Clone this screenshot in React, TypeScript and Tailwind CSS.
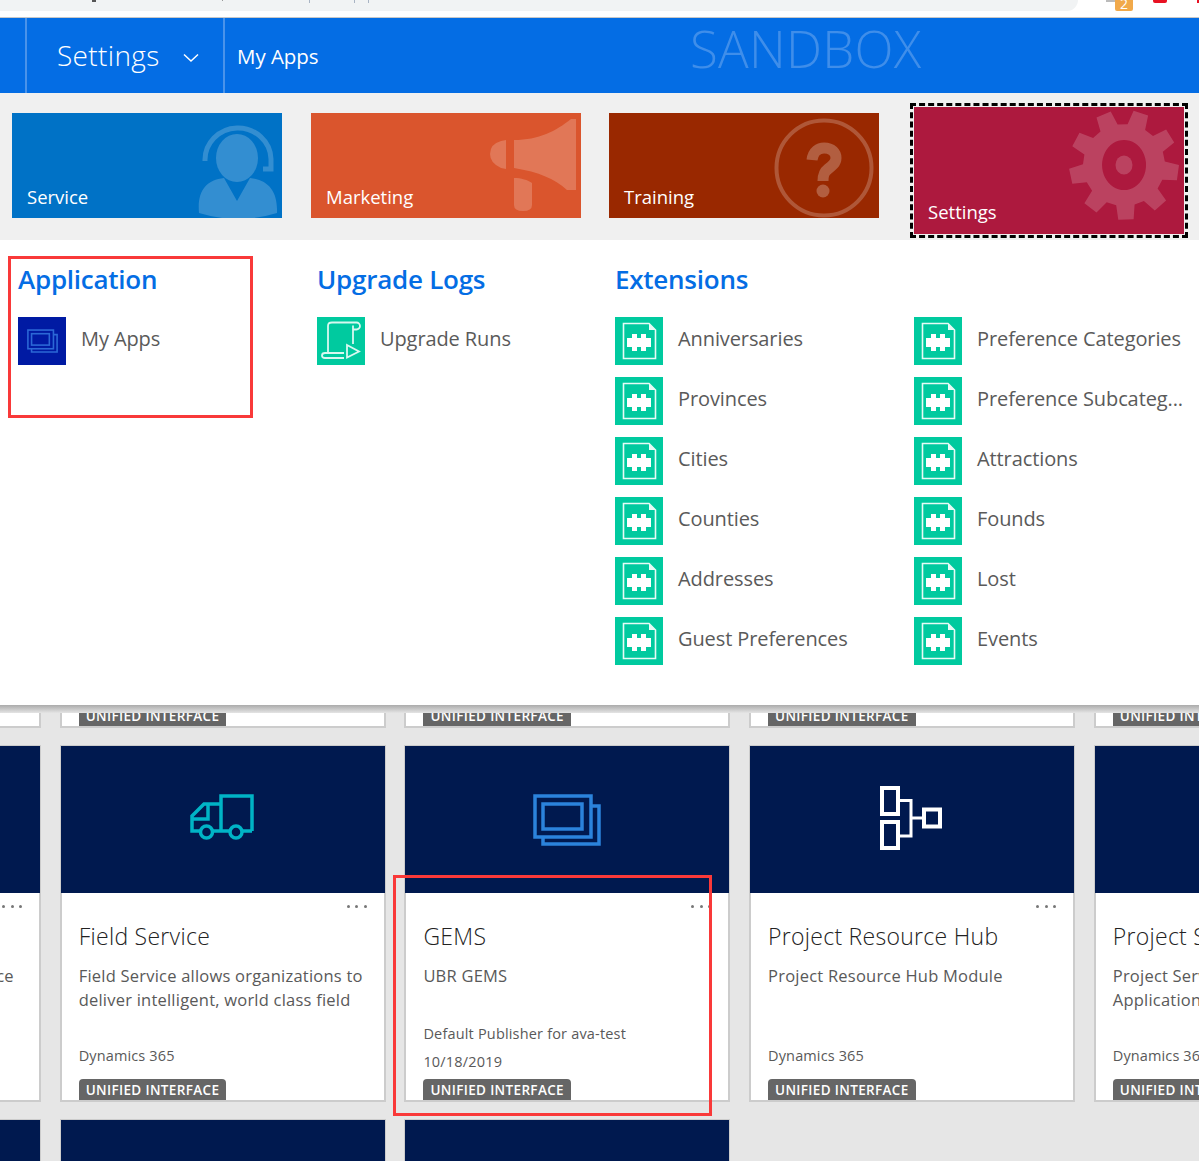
import React from "react";

const FONT = { fontFamily: '"Open Sans","Noto Sans",sans-serif' };

function Tile({ label, bg, children }: { label: string; bg: string; children: React.ReactNode }) {
  return (
    <div className={`relative w-[270px] h-[105px] shrink-0 overflow-hidden ${bg}`}>
      <div className="absolute right-0 top-0 bottom-0 w-[100px]">{children}</div>
      <div className="absolute left-[15px] top-[72px] text-[18.5px] leading-[24px] text-white">{label}</div>
    </div>
  );
}

const AgentIcon = () => (
  <svg width="100" height="105" viewBox="0 0 100 105" fill="none">
    <path d="M23 48 A33 32 0 1 1 89 46 V 56 H 81" stroke="#fff" strokeOpacity=".2" strokeWidth="5" />
    <ellipse cx="55" cy="45" rx="21" ry="24" fill="#fff" fillOpacity=".2" />
    <path d="M17 100 C15 78 24 67 42 65 L55 88 L68 65 C86 67 96 78 95 100 Q56 112 17 100 Z" fill="#fff" fillOpacity=".2" />
  </svg>
);

const MegaphoneIcon = () => (
  <svg width="100" height="105" viewBox="0 0 100 105">
    <g fill="#fff" fillOpacity=".2">
      <path d="M25 27 V 56 L 20 55 Q 9 50 9 41 Q 9 31 20 28 Z" />
      <path d="M33 27 C 58 27 75 18 90 6 H 95 V 77 H 86 C 74 66 58 59 33 55 Z" />
      <path d="M33 65 C 40 65 47 67 51 70 V 92 Q 51 98 42 98 Q 33 98 33 92 Z" />
    </g>
  </svg>
);

const QuestionIcon = () => (
  <svg width="100" height="105" viewBox="0 0 100 105" className="overflow-visible">
    <circle cx="45" cy="55" r="47.5" fill="none" stroke="#fff" strokeOpacity=".22" strokeWidth="4" />
    <path d="M33 47 C34 38 40 35 45 35 C53 35 57 40 57 45 C57 50 53 53 49 56 C45 59 44 62 44 68" fill="none" stroke="#fff" strokeOpacity=".25" strokeWidth="11" />
    <circle cx="44" cy="78" r="6.5" fill="#fff" fillOpacity=".25" />
  </svg>
);

function gearPath(cx: number, cy: number, teeth: number, rootR: number, tipR: number, offset: number) {
  const pts: string[] = [];
  const toXY = (deg: number, r: number) => {
    const a = (deg * Math.PI) / 180;
    return `${(cx + r * Math.cos(a)).toFixed(1)} ${(cy + r * Math.sin(a)).toFixed(1)}`;
  };
  for (let i = 0; i < teeth; i++) {
    const c = offset + (i * 360) / teeth;
    pts.push(toXY(c - 13, rootR), toXY(c - 8, tipR), toXY(c + 8, tipR), toXY(c + 13, rootR));
  }
  return `M${pts.join(" L")} Z`;
}

const GearIcon = () => (
  <svg width="120" height="120" viewBox="0 0 120 120">
    <path
      fillRule="evenodd"
      fill="#fff"
      fillOpacity=".18"
      d={`${gearPath(60, 60, 9, 41, 55, -72)} M60 35 A22 25 0 1 0 60.1 35 Z`}
    />
    <ellipse cx="60" cy="60" rx="8.5" ry="9.5" fill="#fff" fillOpacity=".18" />
  </svg>
);

const AppsGlyph = ({ color, w = 68, h = 52 }: { color: string; w?: number; h?: number }) => (
  <svg width={w} height={h} viewBox="0 0 68 52" fill="none" stroke={color} strokeWidth="3.5">
    <rect x="2" y="2" width="56" height="41" />
    <rect x="10" y="10" width="39" height="25" />
    <path d="M58 12 H 66 V 50 H 10 V 43" />
  </svg>
);

const PuzzleIcon = () => (
  <div className="w-12 h-12 shrink-0 bg-[#00ca9f]">
    <svg width="48" height="48" viewBox="0 0 48 48" fill="none">
      <path d="M8.5 6.5 H 34 L 40.5 13 V 41.5 H 8.5 Z" stroke="#e6fbf6" strokeWidth="1.6" />
      <path d="M34 6.5 V 13 H 40.5 Z" fill="#e6fbf6" />
      <path
        d="M12 21 H 17 V 17 H 22 V 21 H 26 V 17 H 31 V 21 H 36 V 30 H 31 V 34 H 26 V 30 H 22 V 34 H 17 V 30 H 12 Z"
        fill="#fff"
      />
    </svg>
  </div>
);

const ScrollIcon = () => (
  <div className="w-12 h-12 shrink-0 bg-[#00ca9f]">
    <svg width="48" height="48" viewBox="0 0 48 48" fill="none" stroke="#d8f8f0" strokeWidth="1.8">
      <path d="M11 36 V 9 Q 11 5.5 15 5.5 H 39.5 A 3.5 3.5 0 0 1 39.5 12.5 H 36 V 8.5 M 36 12.5 V 27" />
      <path d="M27 41 H 8 Q 5 41 5 38.5 Q 5 36 8 36 H 27" />
      <path d="M30 28 L 42 34.5 L 30 40.5 Z" />
    </svg>
  </div>
);

const MyAppsIcon = () => (
  <div className="w-12 h-12 shrink-0 bg-[#001aa3] flex items-center justify-center">
    <AppsGlyph color="#2b68d6" w={31} h={24} />
  </div>
);

function MenuItem({ label, icon }: { label: string; icon: React.ReactNode }) {
  return (
    <div className="flex items-center h-12 mb-3 gap-[15px]">
      {icon}
      <div className="text-[20px] leading-[44px] tracking-[-0.1px] text-[#5a5a5a] whitespace-nowrap -mt-[5px]">{label}</div>
    </div>
  );
}

function Heading({ children }: { children: React.ReactNode }) {
  return <div className="h-[77px] pt-[21px] text-[26px] leading-[36px] font-semibold tracking-[-0.25px] text-[#046de4] whitespace-nowrap">{children}</div>;
}

const Truck = () => (
  <svg width="64" height="47" viewBox="0 0 64 47" fill="none" stroke="#00b4c6" strokeWidth="3.5" className="-ml-[2px] -mt-[4px]">
    <path d="M31 37 V 2 H 62 V 37 M 62 37 H 53 M 39 37 H 23 M 10 37 H 2 V 22 L 14 10 H 31" />
    <path d="M2 25 H 18 V 10" />
    <circle cx="16.5" cy="38" r="6" />
    <circle cx="46" cy="38" r="6" />
  </svg>
);

const Hierarchy = () => (
  <svg width="64" height="64" viewBox="0 0 64 64" fill="none" stroke="#fff" className="-mt-[4px] -ml-[1px]">
    <rect x="2" y="2" width="16" height="26" strokeWidth="4" />
    <rect x="2" y="36" width="16" height="26" strokeWidth="4" />
    <rect x="44" y="23.5" width="16" height="17" strokeWidth="4" />
    <path d="M19 14.5 H 31 V 50 H 19 M31 32 H 43" strokeWidth="3" />
  </svg>
);

function Card({
  title,
  desc,
  publisher,
  date,
  icon,
}: {
  title?: string;
  desc?: React.ReactNode;
  publisher?: string;
  date?: string;
  icon?: React.ReactNode;
}) {
  return (
    <div className="relative w-[326px] h-[357px] shrink-0 border-2 border-[#cccccc] bg-white">
      <div className="h-[147px] -mt-px -mx-px bg-[#00194f] flex items-center justify-center">{icon}</div>
      <div className="absolute right-[17px] top-[158px] flex gap-[5.5px]">
        <div className="w-[3px] h-[3px] rounded-full bg-[#777]" />
        <div className="w-[3px] h-[3px] rounded-full bg-[#777]" />
        <div className="w-[3px] h-[3px] rounded-full bg-[#777]" />
      </div>
      {title !== undefined && (
        <div className="h-[207px] overflow-hidden">
          <div className="flex flex-col h-[209px] px-[17px]">
            <div className="pt-[26px] text-[23px] font-light leading-[34px] tracking-[0.28px] text-[#222] whitespace-nowrap">{title}</div>
            <div className="mt-[11px] text-[16.5px] leading-[24px] tracking-[0.22px] text-[#595959] h-[48px] whitespace-nowrap">{desc}</div>
            {date ? (
              <div className="flex-1 flex flex-col justify-end text-[14.5px] leading-[28px] tracking-[0.18px] text-[#595959] whitespace-nowrap mb-[3px]">
                <div>{publisher}</div>
                <div>{date}</div>
              </div>
            ) : (
              <div className="flex-1 flex flex-col justify-end text-[14.5px] leading-[28px] tracking-[0.13px] text-[#595959] whitespace-nowrap pb-[9px]">
                <div>{publisher}</div>
              </div>
            )}
            <div className="h-[23px] shrink-0">
              <span className="block w-max h-[23px] px-[7px] rounded-t-[4px] bg-[#666] text-white text-[13.5px] leading-[23px] font-semibold tracking-[0.35px] whitespace-nowrap">
                UNIFIED INTERFACE
              </span>
            </div>
          </div>
        </div>
      )}
    </div>
  );
}

export default function App() {
  const col3 = ["Anniversaries", "Provinces", "Cities", "Counties", "Addresses", "Guest Preferences"];
  const col4 = ["Preference Categories", "Preference Subcateg...", "Attractions", "Founds", "Lost", "Events"];
  return (
    <div className="relative w-[1199px] h-[1161px] overflow-hidden bg-[#e6e6e6]" style={FONT}>
      {/* browser chrome */}
      <div className="relative h-[18px] bg-white border-b border-[#c8c8c8]">
        <div className="w-[1078px] h-[11px] bg-[#f1f3f4] rounded-br-[12px]" />
        <div className="absolute left-[92px] top-0 w-[4px] h-[2px] bg-[#555]" />
        <div className="absolute left-[222px] top-0 w-[1px] h-[1px] bg-[#999]" />
        <div className="absolute left-[309px] top-0 w-[1px] h-[3px] bg-[#a9b4c4]" />
        <div className="absolute left-[354px] top-0 w-[1px] h-[3px] bg-[#a9b4c4]" />
        <div className="absolute left-[368px] top-0 w-[1px] h-[3px] bg-[#a9b4c4]" />
        <div className="absolute left-[1106px] top-0 w-[9px] h-[2px] bg-[#bbb]" />
        <div className="absolute left-[1115px] top-0 w-[18px] h-[11px] overflow-hidden bg-[#f1a94a] rounded-b-[2px] text-white text-[14px] leading-[7px] text-center">2</div>
        <div className="absolute left-[1153px] top-0 w-[14px] h-[3px] bg-[#e81123] rounded-b-[2px]" />
        <div className="absolute left-[1197px] top-0 w-[2px] h-[3px] bg-[#e81123]" />
      </div>

      {/* nav */}
      <div className="relative h-[75px] bg-[#046de4] flex items-stretch text-white">
        <div className="w-[27px] border-r-2 border-[#4a93ea]" />
        <div className="w-[198px] pl-[30px] border-r-2 border-[#4a93ea] flex items-center gap-[23px]">
          <span className="text-[28px] font-light leading-[38px] tracking-[0.35px] -mt-[2px]">Settings</span>
          <svg width="16" height="15" viewBox="0 0 16 15" fill="none" stroke="#fff" strokeWidth="1.5" className="mt-[3px]">
            <path d="M1 4.5 L8 11 L15 4.5" />
          </svg>
        </div>
        <div className="pl-[12px] flex items-center text-[20.5px] tracking-[-0.05px] mt-[2px]">My Apps</div>
        <div className="absolute left-[690px] top-[-3px] text-[51px] leading-[66px] font-light tracking-[0.25px] text-[#3f8eea]">SANDBOX</div>
      </div>

      {/* tiles */}
      <div className="relative h-[147px] bg-[#f0f0f0] flex pl-[12px] pt-[20px] gap-[29px]">
        <Tile label="Service" bg="bg-[#0072c6]"><AgentIcon /></Tile>
        <Tile label="Marketing" bg="bg-[#da552d]"><MegaphoneIcon /></Tile>
        <Tile label="Training" bg="bg-[#992800] -ml-[1px]"><QuestionIcon /></Tile>
        <div className="absolute left-[910px] top-[10px] w-[278px] h-[135px] border-[3px] border-dashed border-black p-px">
          <div className="relative w-full h-full bg-[#ad193e] overflow-hidden">
            <div className="absolute left-[150px] top-[-2px]"><GearIcon /></div>
            <div className="absolute left-[14px] top-[93px] text-[18.5px] leading-[24px] text-white">Settings</div>
          </div>
        </div>
      </div>

      {/* dropdown menu */}
      <div className="relative z-10 h-[465px] bg-white grid grid-cols-[299px_298px_299px_285px] pl-[18px]">
        <div>
          <Heading>Application</Heading>
          <MenuItem label="My Apps" icon={<MyAppsIcon />} />
        </div>
        <div>
          <Heading>Upgrade Logs</Heading>
          <MenuItem label="Upgrade Runs" icon={<ScrollIcon />} />
        </div>
        <div>
          <Heading>Extensions</Heading>
          {col3.map((t) => <MenuItem key={t} label={t} icon={<PuzzleIcon />} />)}
        </div>
        <div className="pt-[77px]">
          {col4.map((t) => <MenuItem key={t} label={t} icon={<PuzzleIcon />} />)}
        </div>
        <div className="absolute left-0 right-0 top-full h-[8px] bg-gradient-to-b from-[#ababab] to-[#e4e4e4]" />
      </div>

      {/* cards */}
      <div className="grid grid-cols-[repeat(5,326px)] gap-x-[18.7px] gap-y-[17px] ml-[-285px] mt-[-334px]">
        <Card title="" publisher=" " />
        <Card title="" publisher=" " />
        <Card title="" publisher=" " />
        <Card title="" publisher=" " />
        <Card title="" publisher=" " />

        <Card title="Customer Service" desc={<span className="block text-right pr-[21px]">Dynamics 365 for Customer Service</span>} publisher="Dynamics 365" />
        <Card title="Field Service" desc={<>Field Service allows organizations to<br />deliver intelligent, world class field</>} publisher="Dynamics 365" icon={<Truck />} />
        <Card title="GEMS" desc="UBR GEMS" publisher="Default Publisher for ava-test" date="10/18/2019" icon={<AppsGlyph color="#2b83dc" />} />
        <Card title="Project Resource Hub" desc="Project Resource Hub Module" publisher="Dynamics 365" icon={<Hierarchy />} />
        <Card title="Project Service" desc={<>Project Service<br />Application</>} publisher="Dynamics 365" />

        <Card />
        <Card />
        <Card />
      </div>

      {/* annotation rectangles */}
      <div className="absolute z-20 left-[8px] top-[256px] w-[245px] h-[162px] border-[3px] border-[#f93939]" />
      <div className="absolute z-20 left-[393px] top-[875px] w-[319px] h-[241px] border-[3px] border-[#f93939]" />
    </div>
  );
}
